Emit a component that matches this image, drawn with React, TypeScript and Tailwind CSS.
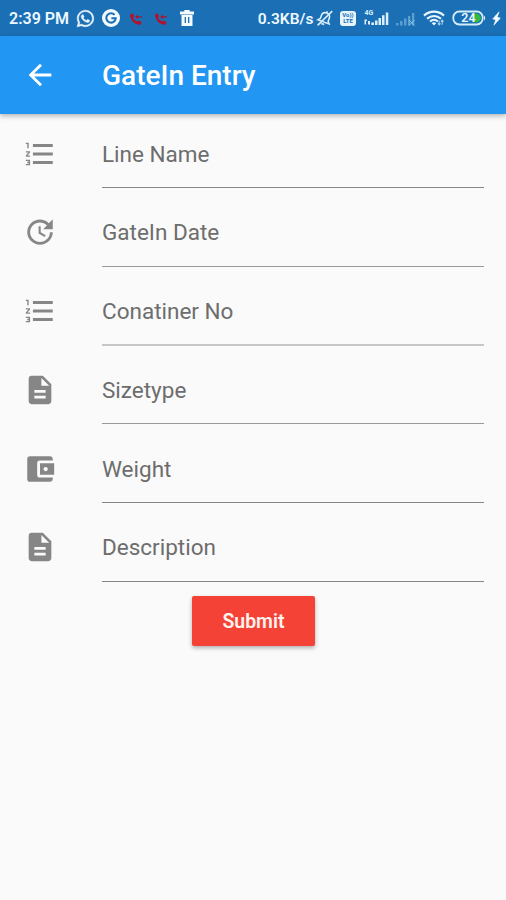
import {
  MdAccountBalanceWallet,
  MdArrowBack,
  MdBolt,
  MdDescription,
  MdFormatListNumbered,
  MdUpdate,
} from 'react-icons/md'
import { FaWhatsapp } from 'react-icons/fa'

const fields = [
  { label: 'Line Name', icon: MdFormatListNumbered, line: 'h-px bg-[#868686]' },
  { label: 'GateIn Date', icon: MdUpdate, line: 'h-px bg-[#999999]' },
  { label: 'Conatiner No', icon: MdFormatListNumbered, line: '-mt-px h-[2px] bg-[#c6c6c6]' },
  { label: 'Sizetype', icon: MdDescription, line: 'h-px bg-[#999999]' },
  { label: 'Weight', icon: MdAccountBalanceWallet, line: 'h-px bg-[#868686]' },
  { label: 'Description', icon: MdDescription, line: 'h-px bg-[#868686]' },
]

function GoogleBadge() {
  return (
    <svg viewBox="0 0 18 18" className="size-[18px]">
      <circle cx="9" cy="9" r="9" fill="#f4fbff" />
      <path d="M12.6 5.9A4.7 4.7 0 1 0 13.7 9.2H9.4" fill="none" stroke="#1b6fb5" strokeWidth="2.1" />
    </svg>
  )
}

function MissedCall() {
  return (
    <svg viewBox="0 0 14 14" className="size-[14px]">
      <path
        d="M1 2.2 3.8 1.4 5.3 4.5 4.1 5.8C4.9 7.5 6.3 8.8 8 9.6L9.4 8.4 12.5 9.9 11.8 12.6C6 13.2 1 8.2 1 2.2Z"
        fill="#b1122c"
      />
      <path d="M6.2 4.9 9 2.6V4.2H12.8V5.6H9V7.2Z" fill="#b1122c" />
    </svg>
  )
}

function Trash() {
  return (
    <svg viewBox="0 0 16 18" className="h-[18px] w-4">
      <path d="M5.3 1H10.7V2.5H15V5.5H1V2.5H5.3ZM2.5 6H13.5V17H2.5Z" fill="#f4fbff" />
      <path d="M6.3 8V14M9.7 8V14" stroke="#1b6fb5" strokeWidth="1.3" />
    </svg>
  )
}

function BellOff() {
  return (
    <svg viewBox="0 0 18 18" className="size-[18px]" fill="none" stroke="#d9effb" strokeWidth="1.6">
      <g transform="rotate(20 9 9)">
        <path d="M3 13.2H15L13.2 11V7.6C13.2 5 11.5 3.6 9 3.6S4.8 5 4.8 7.6V11ZM9 1.8V3.6M7.4 15.4H10.6" />
      </g>
      <path d="M16.4 2 1.6 16.4" />
    </svg>
  )
}

function VolteBadge() {
  return (
    <span className="flex h-[15px] w-4 flex-col items-center justify-center rounded-[3px] bg-[#e6f5fc] text-[6px] leading-[6px] font-bold text-[#1b6fb5]">
      <span>Vo))</span>
      <span>LTE</span>
    </span>
  )
}

function Signal4G() {
  return (
    <svg viewBox="0 0 27 18" className="h-[18px] w-[27px]" fill="#d9effb">
      <text x="1.5" y="5.5" fontSize="7" fontWeight="700">4G</text>
      <path d="M1.5 10.5H4V12H3V15.5H1.5ZM5 12H7V15.5H5ZM8.3 13.5H11V16H8.3ZM12 11.5H14.5V16H12ZM15.5 9H18V16H15.5ZM19 6.2H21.5V16H19ZM22.8 3.5H25.3V16H22.8Z" />
    </svg>
  )
}

function SignalNone() {
  return (
    <svg viewBox="0 0 20 14" className="h-[14px] w-5" fill="#5b9fd0">
      <path d="M0 11H2.5V13.5H0ZM4 9H6.5V13.5H4ZM8 6.5H10.5V13.5H8ZM12 4H14.3V13.5H12ZM16 1H18.3V13.5H16Z" />
      <path d="M13 8 18.5 13.5M18.5 8 13 13.5" stroke="#8fc2e5" strokeWidth="1" />
    </svg>
  )
}

function Wifi() {
  return (
    <svg viewBox="0 0 22 16" className="h-4 w-[22px]" fill="none" stroke="#e6f7ff">
      <path d="M1 5.6C7 .4 15 .4 21 5.6" strokeWidth="2.2" />
      <path d="M4 8.8C8.2 5 13.8 5 18 8.8" strokeWidth="2.1" />
      <path d="M7 11.6C9.4 9.4 12.6 9.4 15 11.6" strokeWidth="2" />
      <path d="M11 15.6 8.8 13.2C10.2 12 11.8 12 13.2 13.2Z" fill="#e6f7ff" stroke="none" />
      <path d="M16.2 15V10.8M14.9 13.4 16.2 15 17.5 13.4M19.2 14.8V10.2M17.9 11.6 19.2 10.1 20.5 11.6" strokeWidth="1.1" stroke="#a6d3ef" />
    </svg>
  )
}

function Battery() {
  return (
    <svg viewBox="0 0 34 16" className="h-4 w-[34px]">
      <rect x="1.3" y="1.5" width="29.4" height="13" rx="6" fill="none" stroke="#d5edf8" strokeWidth="1.8" />
      <path d="M32 5.5C33.6 6.5 33.6 9.5 32 10.5Z" fill="#d5edf8" />
      <path d="M20 3.7H24.5A4.3 4.3 0 0 1 24.5 12.3H20Z" fill="#32b846" />
      <text x="16.5" y="12.4" textAnchor="middle" fontSize="12.5" fontWeight="600" fill="#e9f7ff">24</text>
    </svg>
  )
}

function StatusBar() {
  return (
    <div className="flex h-9 items-center bg-[#1b6fb5] text-[16px] font-semibold text-[#edf8ff]">
      <span className="mt-[2px] ml-[9px] w-[68px] whitespace-nowrap">2:39 PM</span>
      <FaWhatsapp className="size-[19px] stroke-current stroke-[14px]" />
      <span className="ml-[7px]"><GoogleBadge /></span>
      <span className="mt-px ml-[9px]"><MissedCall /></span>
      <span className="mt-px ml-[11px]"><MissedCall /></span>
      <span className="ml-[11px]"><Trash /></span>
      <span className="mt-[3px] ml-[62.5px] w-[59px] whitespace-nowrap text-[15.5px]">0.3KB/s</span>
      <BellOff />
      <span className="ml-[6px]"><VolteBadge /></span>
      <span className="ml-[7px]"><Signal4G /></span>
      <span className="mt-px ml-[6px]"><SignalNone /></span>
      <span className="ml-[7px]"><Wifi /></span>
      <span className="ml-[7px]"><Battery /></span>
      <MdBolt className="ml-px size-[19px] shrink-0 rotate-[12deg]" />
    </div>
  )
}

export default function App() {
  return (
    <div className="h-[900px] w-[506px] overflow-hidden bg-[#fafafa] font-['Roboto',sans-serif]">
      <StatusBar />
      <header className="relative flex h-[78px] items-center bg-[#2196f3] text-white shadow-[0_2px_5px_rgba(0,0,0,0.28)]">
        <MdArrowBack className="ml-[23px] size-[34px]" />
        <h1 className="mt-[2px] ml-[45px] text-[28px] leading-none font-medium">GateIn Entry</h1>
      </header>
      <form>
        {fields.map(f => (
          <div key={f.label} className="flex h-[78.75px] pr-[22px] pl-[22.5px]">
            <f.icon className="mt-[22.5px] size-[34px] shrink-0 text-[#868686]" />
            <div className="ml-[45.5px] flex-1">
              <div className="flex h-[73px] items-center pt-[8px] text-[22.5px] text-[#6d6d6d]">
                {f.label}
              </div>
              <div className={f.line} />
            </div>
          </div>
        ))}
        <button
          type="button"
          className="mt-[9px] ml-[192px] flex h-[50px] w-[123px] items-center justify-center rounded-[2px] bg-[#f44336] pt-[2px] text-[19.4px] font-semibold text-[#fff3ee] shadow-[0_2px_4px_rgba(0,0,0,0.3)]"
        >
          Submit
        </button>
      </form>
    </div>
  )
}
